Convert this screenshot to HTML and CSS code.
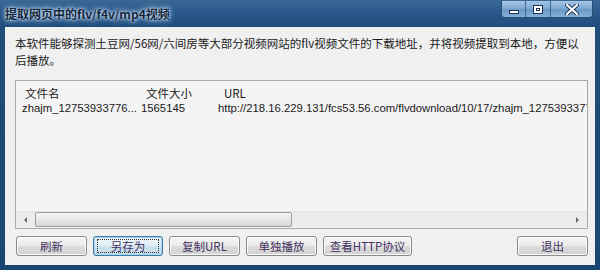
FILE: index.html
```html
<!DOCTYPE html>
<html lang="zh">
<head>
<meta charset="utf-8">
<title>提取网页中的flv/f4v/mp4视频</title>
<link rel="stylesheet" href="styles.css">
</head>
<body>
<div class="window">
  <div class="titlebar">
    <span class="title">提取网页中的flv/f4v/mp4视频</span>
    <div class="controls">
      <span class="ctl ctl-min"><span class="glyph-min"></span></span>
      <span class="ctl ctl-max"><span class="glyph-max"></span></span>
      <span class="ctl ctl-close">
        <svg width="14" height="11" viewBox="0 0 14 11"><path d="M2 1 L12 10 M12 1 L2 10" stroke="#1d3550" stroke-width="4" stroke-linecap="round"/><path d="M2 1 L12 10 M12 1 L2 10" stroke="#ffffff" stroke-width="2.2" stroke-linecap="round"/></svg>
      </span>
    </div>
  </div>
  <div class="client">
    <p class="desc"><span class="line">本软件能够探测土豆网/56网/六间房等大部分视频网站的flv视频文件的下载地址，并将视频提取到本地，方便以</span><span class="line">后播放。</span></p>
    <div class="listbox">
      <div class="list-body">
        <div class="row head">
          <span class="c1 hc1">文件名</span>
          <span class="c2 hc2">文件大小</span>
          <span class="c3 hc3">URL</span>
        </div>
        <div class="row item">
          <span class="c1">zhajm_12753933776...</span>
          <span class="c2">1565145</span>
          <span class="c3">http://218.16.229.131/fcs53.56.com/flvdownload/10/17/zhajm_12753933776.flv</span>
        </div>
      </div>
      <div class="hscroll">
        <span class="arrow arrow-left"></span>
        <span class="thumb"></span>
        <span class="track-rest"></span>
        <span class="arrow arrow-right"></span>
      </div>
    </div>
    <div class="buttons">
      <button class="btn">刷新</button>
      <button class="btn focused"><span class="focus-ring">另存为</span></button>
      <button class="btn">复制URL</button>
      <button class="btn">单独播放</button>
      <button class="btn wide">查看HTTP协议</button>
      <button class="btn exit">退出</button>
    </div>
  </div>
</div>
</body>
</html>
```

FILE: styles.css
```css
* { box-sizing: border-box; }
html, body {
  margin: 0;
  padding: 0;
  width: 600px;
  height: 270px;
  overflow: hidden;
  background: #1f4a76;
}
.window {
  width: 600px;
  height: 270px;
  display: flex;
  flex-direction: column;
  background: linear-gradient(to bottom, #3a6894 0px, #28568a 14px, #214d7c 27px, #1c4672 100%);
}
.titlebar {
  height: 27px;
  display: flex;
  align-items: flex-start;
  padding: 0 7px 0 5px;
  flex: none;
}
.title {
  margin-top: 6px;
  font-family: "Noto Sans CJK SC", "DejaVu Sans", sans-serif;
  font-size: 12px;
  font-weight: bold;
  line-height: 16px;
  color: #13263c;
  text-shadow: 0 0 2px #d8e8f6, 0 0 4px #b8d2ea, 0 0 6px #9cc0e2;
}
.controls {
  margin-left: auto;
  display: flex;
  height: 17px;
  margin-top: 1px;
  border: 1px solid #2a4d72;
  border-top: none;
  border-radius: 0 0 4px 4px;
  overflow: hidden;
}
.ctl {
  height: 16px;
  display: flex;
  align-items: center;
  justify-content: center;
  background: linear-gradient(to bottom, #a6c6e4 0%, #7faad2 45%, #6b98c4 55%, #86b0d6 100%);
  border-right: 1px solid #3e6690;
}
.ctl:last-child { border-right: none; }
.ctl-min { width: 24px; }
.ctl-max { width: 25px; }
.ctl-close { width: 41px; }
.glyph-min {
  width: 10px;
  height: 4px;
  margin-top: 6px;
  background: #ffffff;
  border: 1px solid #1d3550;
}
.glyph-max {
  width: 10px;
  height: 9px;
  border: 1px solid #1d3550;
  background: #ffffff;
  box-shadow: inset 0 0 0 2px #ffffff, inset 0 0 0 3px #1d3550;
}
.client {
  flex: none;
  height: 238px;
  margin: 0 5px;
  background: #f0f0f0;
  display: flex;
  flex-direction: column;
  padding: 8px 7px 0 10px;
}
.desc {
  margin: 0;
  font-family: "Noto Sans CJK SC", sans-serif;
  font-size: 11.5px;
  line-height: 17px;
  color: #1a1a1a;
}
.line { display: block; white-space: nowrap; }
.listbox {
  margin-top: 11px;
  height: 149px;
  border: 1px solid #a9a9a9;
  background: #f4f4f4;
  display: flex;
  flex-direction: column;
  overflow: hidden;
}
.list-body {
  flex: 1;
  padding-top: 4px;
  overflow: hidden;
}
.row {
  display: flex;
  height: 15px;
  align-items: center;
  white-space: nowrap;
}
.head {
  font-family: "Noto Sans CJK SC", sans-serif;
  font-size: 11.5px;
  color: #1a1a1a;
}
.item {
  font-family: "Liberation Sans", sans-serif;
  font-size: 11.3px;
  color: #1a1a1a;
}
.c1 { width: 125px; padding-left: 6px; flex: none; }
.c2 { width: 77px; flex: none; }
.c3 { flex: none; }
.hc1 { padding-left: 9px; }
.hc2 { padding-left: 5px; }
.hc3 { padding-left: 6px; }
.hscroll {
  height: 16px;
  flex: none;
  display: flex;
  align-items: center;
  background: #ececec;
  border-top: 1px solid #e2e2e2;
  margin-bottom: 1px;
}
.arrow {
  width: 0;
  height: 0;
  border-top: 3px solid transparent;
  border-bottom: 3px solid transparent;
  flex: none;
}
.arrow-left {
  margin-left: 8px;
  border-right: 3px solid #6a6a6a;
}
.arrow-right {
  margin-right: 8px;
  border-left: 3px solid #6a6a6a;
}
.thumb {
  width: 257px;
  height: 15px;
  margin-left: 8px;
  border: 1px solid #9c9c9c;
  border-radius: 2px;
  background: linear-gradient(to bottom, #f6f6f6 0%, #e8e8e8 50%, #d6d6d6 100%);
  flex: none;
}
.track-rest { flex: 1; }
.buttons {
  margin-top: 7px;
  display: flex;
  gap: 6px;
  padding-left: 1px;
}
.btn {
  width: 71px;
  height: 20px;
  padding: 0;
  border: 1px solid #8a8a8a;
  border-radius: 3px;
  background: linear-gradient(to bottom, #f6f6f6 0%, #ebebeb 48%, #dcdcdc 52%, #d2d2d2 100%);
  font-family: "Noto Sans CJK SC", sans-serif;
  font-size: 11.5px;
  line-height: 16px;
  color: #43315f;
  box-shadow: inset 0 0 0 1px #fbfbfb;
  display: flex;
  align-items: center;
  justify-content: center;
}
.btn.focused {
  width: 70px;
  border-color: #3c7aa8;
  box-shadow: inset 0 0 0 1px #9fd6f0;
  background: linear-gradient(to bottom, #eef6fb 0%, #e0eef6 48%, #cfe3ef 52%, #c4dbe9 100%);
}
.focus-ring {
  width: 62px;
  height: 14px;
  border: 1px dotted #333333;
  display: flex;
  align-items: center;
  justify-content: center;
  line-height: 12px;
}
.btn.wide { width: 89px; }
.btn.exit { margin-left: auto; }
```
